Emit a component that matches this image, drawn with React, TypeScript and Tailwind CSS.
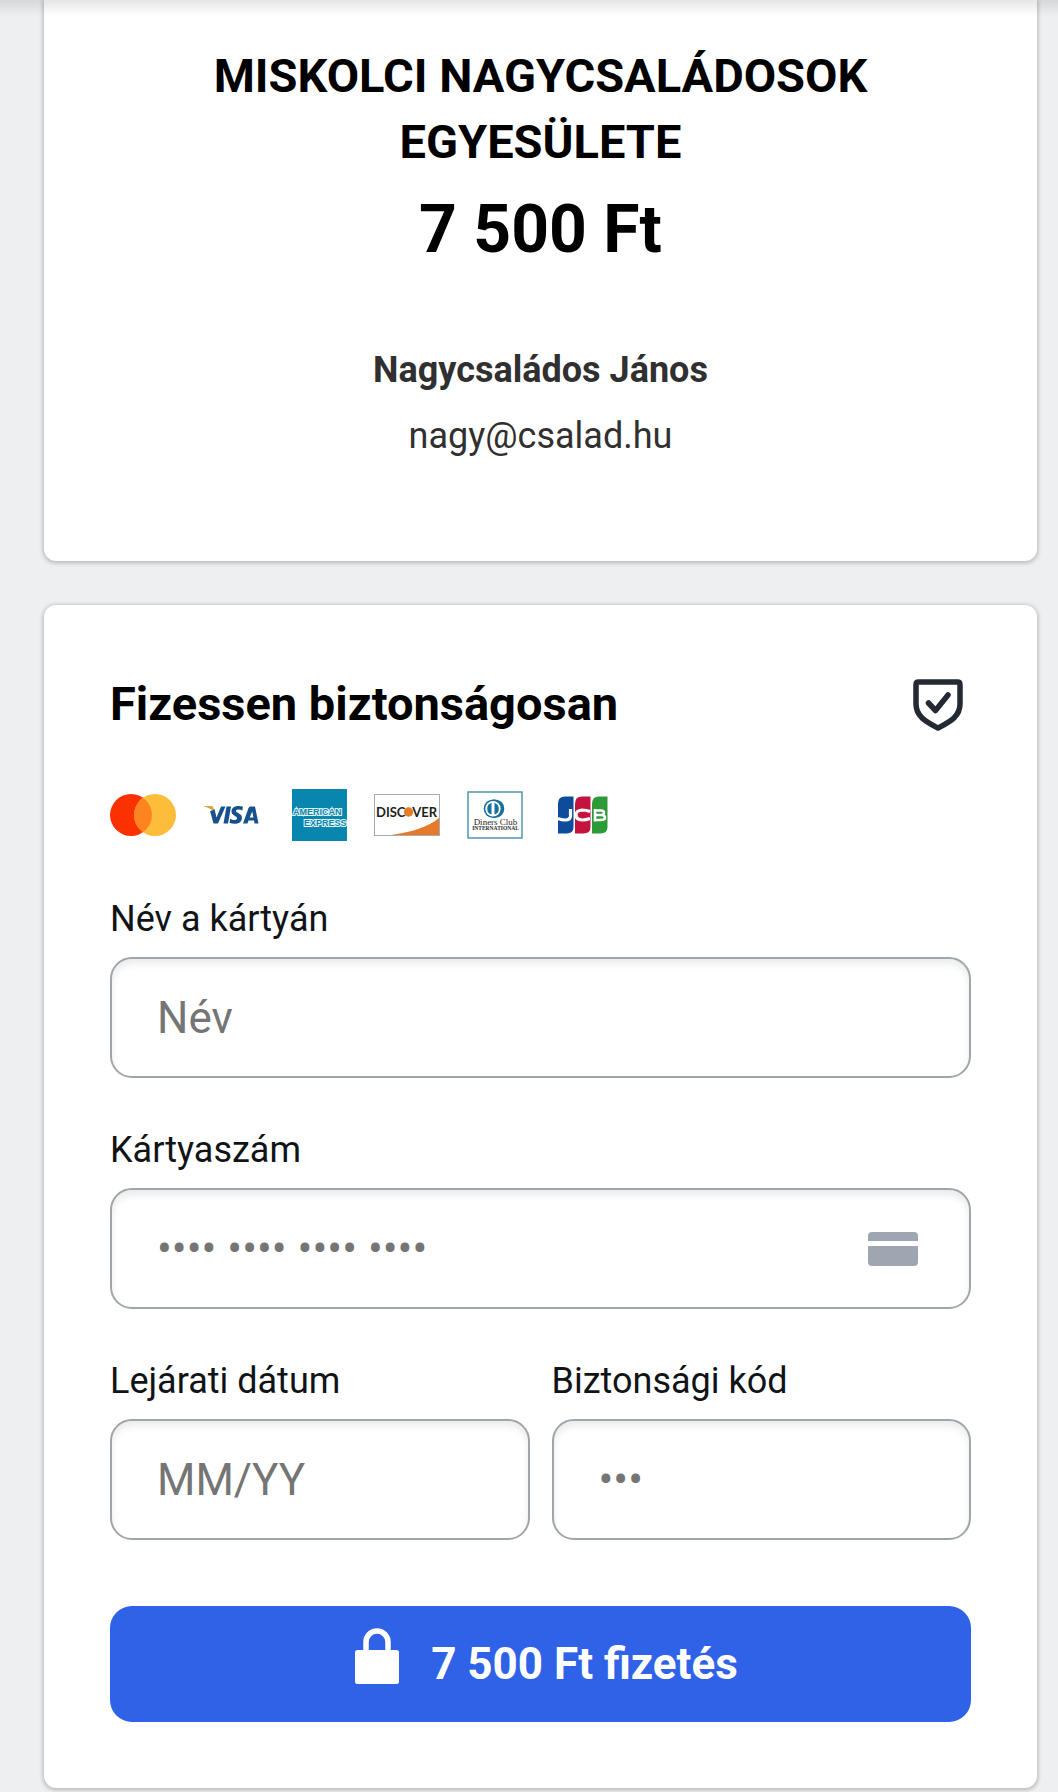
import React from "react";

const inputClass =
  "h-[121px] w-full min-w-0 rounded-[22px] border-2 border-[#a0a5aa] bg-white px-[45px] text-[44px] text-gray-900 shadow-[inset_0_5px_7px_rgba(60,70,80,0.11)] outline-none placeholder:text-[#757575] focus:border-[#3062e8]";

function Field({
  id,
  label,
  placeholder,
  children,
}: {
  id: string;
  label: string;
  placeholder: string;
  children?: React.ReactNode;
}) {
  return (
    <div className="flex min-w-0 flex-1 flex-col gap-[14px]">
      <label htmlFor={id} className="text-[36px] leading-[48px] text-[#111417]">
        {label}
      </label>
      <div className="relative">
        <input id={id} type="text" placeholder={placeholder} className={inputClass} />
        {children}
      </div>
    </div>
  );
}

function ShieldIcon() {
  return (
    <svg viewBox="0 0 66 66" className="h-[66px] w-[66px] shrink-0" fill="none" stroke="#232a33" strokeLinecap="round" strokeLinejoin="round">
      <path d="M13.500 11H52.500Q55 11 55 13.500V33C55 46 44 51 33 57C22 51 11 46 11 33V13.500Q11 11 13.500 11Z" strokeWidth="5.500" />
      <path d="M23.500 32L30.500 39.500L43 24" strokeWidth="5.500" />
    </svg>
  );
}

function Mastercard() {
  return (
    <svg viewBox="0 0 66 42" className="h-[42px] w-[66px]" role="img" aria-label="Mastercard">
      <circle cx="21" cy="21" r="21" fill="#fb3200" />
      <circle cx="45" cy="21" r="21" fill="#fdbd3a" />
      <path d="M33 3.800A21 21 0 0 1 33 38.200A21 21 0 0 1 33 3.800Z" fill="#fe8420" />
    </svg>
  );
}

function Visa() {
  return (
    <svg viewBox="0 0 56 20" className="h-5 w-14" role="img" aria-label="Visa">
      <path d="M1 1H8Q10 1 10.500 3L11.500 8Q8.500 3 1 1.500Z" fill="#d9a441" />
      <path d="M7 6L10.500 18.500H15L22.500 1.500H18L13.500 12.500L11.500 4Q9.500 6 7 6Z" fill="#17508a" />
      <path d="M23.500 1.500H28L25 18.500H20.500Z" fill="#17508a" />
      <path d="M40 1.800L39.300 5.500C36.500 4 33 4.300 33 6C33 8 39 8.300 39 12.700C39 19.300 31 19.500 26.500 17.700L27.200 13.800C30.500 15.700 34 15.300 34 13.200C34 11 28.500 10.800 28.500 6.600C28.500 1 35.500 0.300 40 1.800Z" fill="#17508a" />
      <path fillRule="evenodd" d="M47.500 1.500H52L55.500 18.500H51.500L51 15.500H45.500L44.500 18.500H40L45.500 3Q46 1.500 47.500 1.500ZM49.300 6.500L46.700 12.500H50.400Z" fill="#17508a" />
    </svg>
  );
}

function Amex() {
  return (
    <svg viewBox="0 0 55 52" className="h-[52px] w-[55px]" role="img" aria-label="American Express">
      <rect width="55" height="52" fill="#0886ae" />
      <g fill="#0886ae" stroke="#e4f5fa" strokeWidth="2" paintOrder="stroke" fontFamily="Liberation Sans" fontWeight="700" fontSize="9">
        <text x="1" y="26">AMERICAN</text>
        <text x="12" y="37">EXPRESS</text>
      </g>
    </svg>
  );
}

function Discover() {
  return (
    <svg viewBox="0 0 66 42" className="h-[42px] w-[66px]" role="img" aria-label="Discover">
      <rect x=".5" y=".5" width="65" height="41" fill="#fff" stroke="#aaa" />
      <path d="M65 24V41H17C38 38 54 33 65 24Z" fill="#e57b2a" />
      <g fill="#231f20" fontFamily="Lato" fontWeight="700" fontSize="13">
        <text x="2" y="22.500">DISC</text>
        <text x="63" y="22.500" textAnchor="end">VER</text>
      </g>
      <circle cx="34.500" cy="18" r="4.700" fill="#e87d27" />
    </svg>
  );
}

function Diners() {
  return (
    <svg viewBox="0 0 56 48" className="h-12 w-14" role="img" aria-label="Diners Club International">
      <rect x="1" y="1" width="54" height="46" fill="#fff" stroke="#4f97b3" strokeWidth="1.500" />
      <path d="M26 8.400H28A9.300 9.300 0 0 1 28 27H26Z" fill="#176f9d" />
      <circle cx="26" cy="17.700" r="9.300" fill="#176f9d" />
      <circle cx="26" cy="17.700" r="7.700" fill="#fff" />
      <path d="M24.500 12V23.500A6 6 0 0 1 24.500 12ZM27.500 12V23.500A6 6 0 0 0 27.500 12Z" fill="#176f9d" />
      <g fill="#27292c" fontFamily="Liberation Serif" textAnchor="middle">
        <text x="28.500" y="33.500" fontSize="9">Diners Club</text>
        <text x="28.500" y="39" fontSize="5.500" fontWeight="700">INTERNATIONAL</text>
      </g>
    </svg>
  );
}

function Jcb() {
  return (
    <svg viewBox="0 0 50 38" className="h-[38px] w-[50px]" role="img" aria-label="JCB">
      <path d="M7 .5H15.500V31Q15.500 37.500 8.500 37.500H0V7.500Q0 .5 7 .5Z" fill="#0e4c9b" />
      <path d="M24 .5H32.500V31Q32.500 37.500 25.500 37.500H17V7.500Q17 .5 24 .5Z" fill="#c4143e" />
      <path d="M41 .5H49.500V31Q49.500 37.500 42.500 37.500H34V7.500Q34 .5 41 .5Z" fill="#2c9a37" />
      <g fill="none" stroke="#fff" strokeWidth="3.200">
        <path d="M0 22.500Q3 24 7 24Q12.500 24 12.500 20V13" />
        <path d="M32 15.500Q28 14 24 14Q18 14.500 18 19Q18 23.500 24 24Q28 24 32 22.500" />
        <path d="M36 14.500H43Q46 14.500 46 16.700Q46 19 43 19H36M43 19Q47 19 47 21.500Q47 24 43 24H36M37 13V25.500" strokeWidth="2.600" />
      </g>
    </svg>
  );
}

function CardIcon() {
  return (
    <svg viewBox="0 0 50 34" className="pointer-events-none absolute top-11 right-[53px] h-[34px] w-[50px]" fill="#9da6b1" aria-hidden="true">
      <path d="M4 0H46Q50 0 50 4V9H0V4Q0 0 4 0Z" />
      <path d="M0 14H50V30Q50 34 46 34H4Q0 34 0 30Z" />
    </svg>
  );
}

function LockIcon() {
  return (
    <svg viewBox="0 0 44 56" className="mb-4 h-14 w-11" aria-hidden="true">
      <rect y="22" width="44" height="34" rx="2.500" fill="#fff" />
      <path d="M11 24V14A11 11 0 0 1 33 14V24" fill="none" stroke="#fff" strokeWidth="5.500" />
    </svg>
  );
}

const brands = [Mastercard, Visa, Amex, Discover, Diners, Jcb];

export default function App() {
  return (
    <main className="relative flex min-h-screen flex-col gap-11 bg-[#eeeff1] pr-[21px] pb-1 pl-11 font-['Roboto',sans-serif] text-black">
      <div className="pointer-events-none absolute inset-x-0 top-0 h-4 bg-linear-to-b from-black/10 to-transparent" />

      <section className="flex flex-col items-center rounded-b-xl bg-white px-[66px] pt-[43px] pb-[92px] text-center shadow-[0_1px_4px_1px_rgba(0,0,0,0.24)]">
        <h1 className="max-w-[720px] text-[47px] leading-[66px] font-bold">MISKOLCI NAGYCSALÁDOSOK EGYESÜLETE</h1>
        <p className="mt-3 text-[66px] leading-[86px] font-bold">7 500 Ft</p>
        <p className="mt-16 text-[36px] leading-[66px] font-bold text-[#303030]">Nagycsaládos János</p>
        <p className="text-[36px] leading-[66px] text-[#303030]">nagy@csalad.hu</p>
      </section>

      <section className="rounded-xl bg-white p-[66px] shadow-[0_1px_4px_1px_rgba(0,0,0,0.24)]">
        <div className="flex items-center justify-between">
          <h2 className="text-[47px] leading-[66px] font-bold">Fizessen biztonságosan</h2>
          <ShieldIcon />
        </div>

        <ul className="mt-[52px] flex h-[52px] items-center gap-[22px]">
          {brands.map((Brand, i) => (
            <li key={i} className="flex w-[66px] items-center justify-center">
              <Brand />
            </li>
          ))}
        </ul>

        <form className="mt-[54px] flex flex-col gap-12" onSubmit={(e) => e.preventDefault()}>
          <Field id="name" label="Név a kártyán" placeholder="Név" />
          <Field id="number" label="Kártyaszám" placeholder="•••• •••• •••• ••••">
            <CardIcon />
          </Field>
          <div className="flex gap-[22px]">
            <Field id="expiry" label="Lejárati dátum" placeholder="MM/YY" />
            <Field id="cvc" label="Biztonsági kód" placeholder="•••" />
          </div>
          <button
            type="submit"
            className="mt-[18px] flex h-[116px] items-center justify-center gap-8 rounded-[22px] bg-[#3062e8] pl-3 text-[44px] font-bold text-white"
          >
            <LockIcon />
            7 500 Ft fizetés
          </button>
        </form>
      </section>
    </main>
  );
}
